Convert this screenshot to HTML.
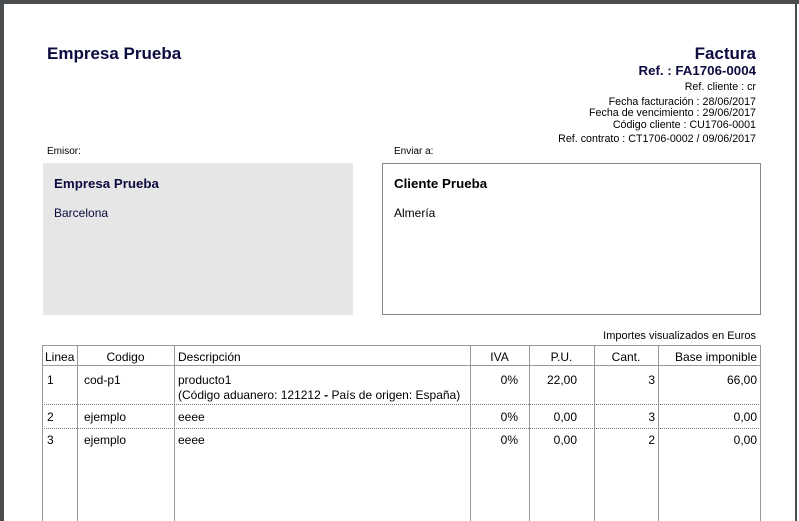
<!DOCTYPE html>
<html><head><meta charset="utf-8"><style>
*{margin:0;padding:0;box-sizing:border-box}
body{width:799px;height:521px;overflow:hidden;background:#fff;font-family:"Liberation Sans",sans-serif;color:#000;position:relative}
.a{position:absolute;white-space:nowrap}
.n{color:#0b0b40}
.r{text-align:right}
.vl{position:absolute;top:345px;bottom:0;width:1px;background:#999}
.hl{position:absolute;left:42px;width:719px;height:0}
.t{position:absolute;font-size:12px;white-space:nowrap}
.s{font-size:10.7px}
</style></head><body>
<div class="a" style="left:0;top:0;width:799px;height:4px;background:#4a4d50"></div>
<div class="a" style="left:0;top:0;width:4px;height:521px;background:#4a4d50"></div>
<div class="a" style="left:795px;top:0;width:2px;height:521px;background:#4a4d50"></div>

<div class="a n" style="left:47px;top:44px;font-size:17px;font-weight:bold">Empresa Prueba</div>
<div class="a n r" style="right:43px;top:44px;font-size:17px;font-weight:bold">Factura</div>
<div class="a n r" style="right:43px;top:63px;font-size:13.3px;font-weight:bold">Ref. : FA1706-0004</div>
<div class="a r s" style="right:43px;top:81px">Ref. cliente : cr</div>
<div class="a r s" style="right:43px;top:96px">Fecha facturación : 28/06/2017</div>
<div class="a r s" style="right:43px;top:107px">Fecha de vencimiento : 29/06/2017</div>
<div class="a r s" style="right:43px;top:119px">Código cliente : CU1706-0001</div>
<div class="a r s" style="right:43px;top:133px">Ref. contrato : CT1706-0002 / 09/06/2017</div>

<div class="a" style="left:47px;top:146px;font-size:10px">Emisor:</div>
<div class="a" style="left:394px;top:146px;font-size:10px">Enviar a:</div>
<div class="a" style="left:43px;top:163px;width:310px;height:152px;background:#e6e6e6"></div>
<div class="a n" style="left:54px;top:176px;font-size:13.3px;font-weight:bold">Empresa Prueba</div>
<div class="a n" style="left:54px;top:206px;font-size:12px">Barcelona</div>
<div class="a" style="left:382px;top:163px;width:379px;height:152px;border:1px solid #888"></div>
<div class="a" style="left:394px;top:176px;font-size:13.3px;font-weight:bold">Cliente Prueba</div>
<div class="a" style="left:394px;top:206px;font-size:12px">Almería</div>

<div class="a r" style="right:43px;top:330px;font-size:11px">Importes visualizados en Euros</div>
<div class="hl" style="top:345px;border-top:1px solid #999"></div>
<div class="hl" style="top:365px;border-top:1px solid #999"></div>
<div class="hl" style="top:404px;border-top:1px dotted #777"></div>
<div class="hl" style="top:428px;border-top:1px dotted #777"></div>
<div class="vl" style="left:42px"></div>
<div class="vl" style="left:77px"></div>
<div class="vl" style="left:174px"></div>
<div class="vl" style="left:470px"></div>
<div class="vl" style="left:529px"></div>
<div class="vl" style="left:594px"></div>
<div class="vl" style="left:658px"></div>
<div class="vl" style="left:760px"></div>

<div class="t" style="left:45px;top:350px">Linea</div>
<div class="t" style="left:77px;width:97px;text-align:center;top:350px">Codigo</div>
<div class="t" style="left:178px;top:350px">Descripción</div>
<div class="t" style="left:470px;width:59px;text-align:center;top:350px">IVA</div>
<div class="t" style="left:529px;width:65px;text-align:center;top:350px">P.U.</div>
<div class="t" style="left:594px;width:64px;text-align:center;top:350px">Cant.</div>
<div class="t" style="left:658px;width:99px;text-align:right;top:350px">Base imponible</div>

<div class="t" style="left:47px;top:373px">1</div>
<div class="t" style="left:84px;top:373px">cod-p1</div>
<div class="t" style="left:178px;top:373px">producto1</div>
<div class="t" style="left:178px;top:388px">(Código aduanero: 121212 <b>-</b> País de origen: España)</div>
<div class="t r" style="right:281px;top:373px">0%</div>
<div class="t r" style="right:222px;top:373px">22,00</div>
<div class="t r" style="right:144px;top:373px">3</div>
<div class="t r" style="right:42px;top:373px">66,00</div>

<div class="t" style="left:47px;top:410px">2</div>
<div class="t" style="left:84px;top:410px">ejemplo</div>
<div class="t" style="left:178px;top:410px">eeee</div>
<div class="t r" style="right:281px;top:410px">0%</div>
<div class="t r" style="right:222px;top:410px">0,00</div>
<div class="t r" style="right:144px;top:410px">3</div>
<div class="t r" style="right:42px;top:410px">0,00</div>

<div class="t" style="left:47px;top:433px">3</div>
<div class="t" style="left:84px;top:433px">ejemplo</div>
<div class="t" style="left:178px;top:433px">eeee</div>
<div class="t r" style="right:281px;top:433px">0%</div>
<div class="t r" style="right:222px;top:433px">0,00</div>
<div class="t r" style="right:144px;top:433px">2</div>
<div class="t r" style="right:42px;top:433px">0,00</div>
</body></html>
